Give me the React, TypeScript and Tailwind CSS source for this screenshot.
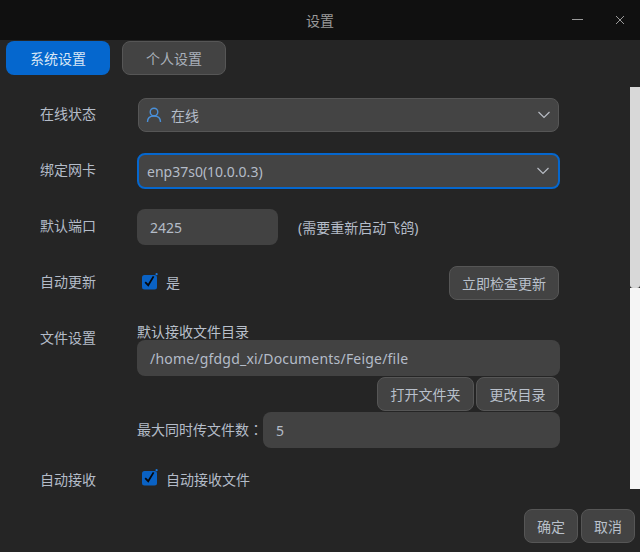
const font = '[font-family:"Noto_Sans","Noto_Sans_CJK_SC",sans-serif]';

function Chevron() {
  return (
    <svg width="14" height="10" viewBox="0 0 14 10" fill="none" className="shrink-0">
      <path d="M1.5 2l5.5 5.5L12.5 2" stroke="#b8bcc4" strokeWidth="1.2" />
    </svg>
  );
}

function Check({ label, labelClass = '' }: { label: string; labelClass?: string }) {
  return (
    <div className="flex items-center">
      <svg width="17" height="17" viewBox="0 0 17 17" fill="none" className="ml-[4px] mt-[-4px] shrink-0">
        <rect x="1" y="2" width="15" height="14.5" rx="2.5" fill="#0a62c4" />
        <path d="M4.2 9.2l3 3L12.6 3.4" stroke="#06080c" strokeWidth="1.8" />
        <circle cx="15.6" cy="1.2" r="1.1" fill="#1c78dc" />
      </svg>
      <span className={`ml-[8px] ${labelClass}`}>{label}</span>
    </div>
  );
}

function Btn({ label, className }: { label: string; className: string }) {
  return (
    <button className={`h-[34px] flex items-center justify-center rounded-lg border border-[#565656] bg-[#434343] text-[#b9c0cb] ${className}`}>
      {label}
    </button>
  );
}

function Field({ value, className }: { value: string; className: string }) {
  return (
    <div className={`h-[36px] flex items-center rounded-lg bg-[#424242] pl-[13px] text-[#b4bcc8] ${className}`}>
      {value}
    </div>
  );
}

export default function App() {
  return (
    <div className={`w-[640px] h-[552px] flex flex-col overflow-hidden bg-[#252525] text-[14px] text-[#b4bcc8] ${font}`}>
      {/* title bar */}
      <div className="h-[40px] shrink-0 flex items-center bg-[#101010] relative">
        <span className="flex-1 text-center text-[#9a9a9a]">设置</span>
        <svg width="64" height="12" viewBox="0 0 64 12" fill="none" className="absolute right-[4px] top-[14px]">
          <path d="M0 5.5h11" stroke="#9a9a9a" />
          <path d="M44 2l8 8M52 2l-8 8" stroke="#9a9a9a" />
        </svg>
      </div>

      {/* tabs */}
      <div className="flex pl-[6px] pt-[1px] gap-[12px]">
        <div className="w-[104px] h-[34px] flex items-center justify-center rounded-lg bg-[#0567ce] text-[#d8e6f5]">系统设置</div>
        <div className="w-[104px] h-[34px] flex items-center justify-center rounded-lg border border-[#565656] bg-[#434343] text-[#a9b0ba]">个人设置</div>
      </div>

      <div className="flex-1 flex min-h-0">
        <div className="flex-1 pl-[40px] pr-[70px]">
          {/* online */}
          <div className="flex items-center mt-[23px]">
            <span className="w-[98px] mt-[-3px]">在线状态</span>
            <div className="flex-1 h-[34px] flex items-center rounded-lg border border-[#565656] bg-[#444444] pl-[6px] pr-[7px] mr-px">
              <svg width="18" height="18" viewBox="0 0 18 18" fill="none" className="shrink-0">
                <circle cx="9" cy="6" r="3.8" stroke="#4a90d9" strokeWidth="1.4" />
                <path d="M2.5 16c0-4 2.8-6 6.5-6s6.500 2 6.500 6" stroke="#4a90d9" strokeWidth="1.4" />
              </svg>
              <span className="ml-[8px] flex-1">在线</span>
              <Chevron />
            </div>
          </div>

          {/* bound NIC */}
          <div className="flex items-center mt-[21px]">
            <span className="w-[97px] mt-[-3px]">绑定网卡</span>
            <div className="flex-1 h-[36px] flex items-center rounded-lg border-2 border-[#0567ce] bg-[#444444] pl-[8px] pr-[8px]">
              <span className="flex-1">enp37s0(10.0.0.3)</span>
              <Chevron />
            </div>
          </div>

          {/* port */}
          <div className="flex items-center mt-[20px]">
            <span className="w-[97px] mt-[-3px]">默认端口</span>
            <Field value="2425" className="w-[141px]" />
            <span className="ml-[20px]">(需要重新启动飞鸽)</span>
          </div>

          {/* update */}
          <div className="flex items-center mt-[21px]">
            <span className="w-[97px] mt-[-3px]">自动更新</span>
            <Check label="是" labelClass="mt-[-2px]" />
            <Btn label="立即检查更新" className="w-[110px] ml-auto mr-px" />
          </div>

          {/* files */}
          <div className="flex mt-[21px]">
            <span className="w-[97px] mt-[6px]">文件设置</span>
            <div className="flex-1 flex flex-col">
              <span className="h-[18px] leading-[19px] mt-[1px] text-[#b9c0cb]">默认接收文件目录</span>
              <Field value="/home/gfdgd_xi/Documents/Feige/file" className="w-full tracking-[0.2px]" />
              <div className="flex justify-end gap-[2px] mt-px pr-px">
                <Btn label="打开文件夹" className="w-[97px]" />
                <Btn label="更改目录" className="w-[83px]" />
              </div>
              <div className="flex items-center mt-px">
                <span className="w-[126px] mt-[-1px]">
                  最大同时传文件数<span className='[font-family:"Noto_Sans_CJK_TC",sans-serif]'>：</span>
                </span>
                <Field value="5" className="flex-1" />
              </div>
            </div>
          </div>

          {/* auto receive */}
          <div className="flex items-center mt-[21px]">
            <span className="w-[97px]">自动接收</span>
            <Check label="自动接收文件" />
          </div>
        </div>

        {/* scrollbar */}
        <div className="w-[10px] mt-[12px] flex flex-col shrink-0">
          <div className="h-[201px] rounded-b-[3px] bg-[#d8d8d8]" />
          <div className="flex-1 bg-[#f5f5f5]" />
        </div>
      </div>

      {/* footer */}
      <div className="h-[63px] shrink-0 flex justify-end gap-[3px] pt-[20px] pr-[5px]">
        <Btn label="确定" className="w-[54px]" />
        <Btn label="取消" className="w-[54px]" />
      </div>
    </div>
  );
}
